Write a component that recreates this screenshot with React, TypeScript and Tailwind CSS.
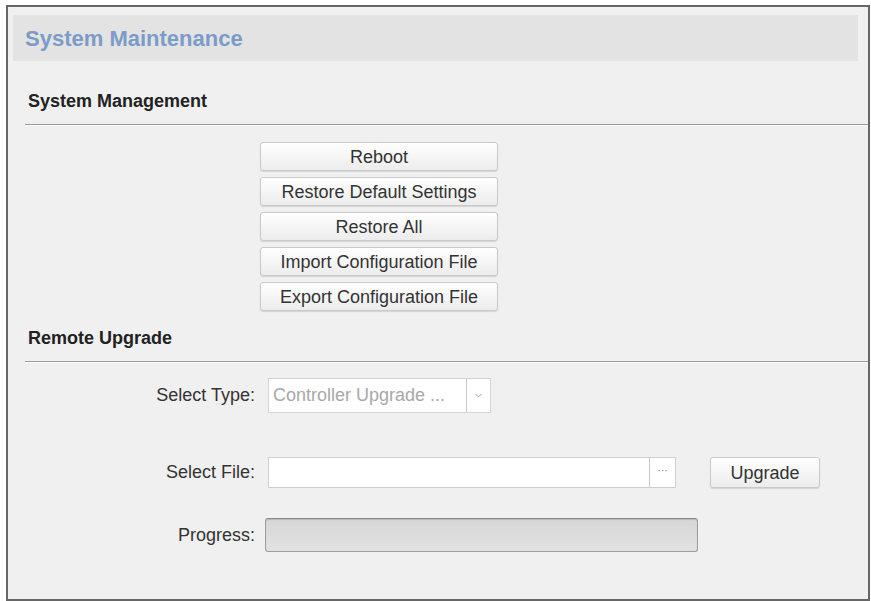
import { ChevronDown } from "lucide-react";

const actions = [
  "Reboot",
  "Restore Default Settings",
  "Restore All",
  "Import Configuration File",
  "Export Configuration File",
];

function SectionTitle({ label, top }: { label: string; top: string }) {
  return (
    <div className={top}>
      <div className="pl-[20px] text-[18px] leading-[22px] font-bold text-[#222]">
        {label}
      </div>
      <div className="mt-[12px] ml-[17px] h-[2px] border-t border-[#9a9a9a] bg-white/70" />
    </div>
  );
}

function FieldLabel({ text }: { text: string }) {
  return (
    <div className="w-[248px] shrink-0 pr-[1px] text-right text-[18px] text-[#333]">
      {text}
    </div>
  );
}

export default function App() {
  return (
    <div
      className="w-[871px] h-[601px] bg-white pt-[5px] pl-[6px] overflow-hidden"
      style={{ fontFamily: '"Liberation Sans", Arial, sans-serif' }}
    >
      <div className="w-[864px] h-[596px] border-2 border-[#666] bg-[#f0f0f0] flex flex-col">
        {/* page header */}
        <div className="mt-[8px] ml-[5px] w-[845px] h-[46px] bg-[#e3e3e3] flex items-center pl-[12px]">
          <span className="text-[22px] font-bold text-[#7b9cc8]">
            System Maintenance
          </span>
        </div>

        <SectionTitle label="System Management" top="mt-[29px]" />

        <div className="mt-[16px] ml-[252px] flex flex-col gap-[6px]">
          {actions.map((a) => (
            <button
              key={a}
              className="w-[238px] h-[29px] rounded-[3px] border border-[#c9c9c9] bg-gradient-to-b from-white to-[#ececec] shadow-[0_1px_1px_rgba(0,0,0,0.12)] text-[18px] leading-none text-[#333]"
            >
              {a}
            </button>
          ))}
        </div>

        <SectionTitle label="Remote Upgrade" top="mt-[16px]" />

        {/* select type */}
        <div className="mt-[15px] flex items-center">
          <FieldLabel text="Select Type:" />
          <div className="ml-[12px] w-[223px] h-[35px] flex border border-[#d4d4d4] bg-white">
            <div className="flex-1 flex items-center pl-[4px] text-[18px] text-[#a8a8a8]">
              Controller Upgrade ...
            </div>
            <div className="w-[24px] border-l border-[#c8c8c8] flex items-center justify-center">
              <ChevronDown className="w-[11px] h-[11px] text-[#9a9a9a]" strokeWidth={2} />
            </div>
          </div>
        </div>

        {/* select file */}
        <div className="mt-[44px] flex items-center">
          <FieldLabel text="Select File:" />
          <div className="ml-[12px] w-[408px] h-[31px] flex border border-[#cfcfcf] bg-white">
            <div className="flex-1" />
            <div className="w-[26px] border-l border-[#c8c8c8] flex items-center justify-center text-[10px] leading-none text-[#777] pb-[4px]">
              ···
            </div>
          </div>
          <button className="ml-[34px] w-[110px] h-[31px] rounded-[3px] border border-[#c9c9c9] bg-gradient-to-b from-white to-[#ececec] shadow-[0_1px_1px_rgba(0,0,0,0.12)] text-[18px] leading-none text-[#333]">
            Upgrade
          </button>
        </div>

        {/* progress */}
        <div className="mt-[30px] flex items-center">
          <FieldLabel text="Progress:" />
          <div className="ml-[9px] w-[433px] h-[34px] rounded-[3px] border border-[#9d9d9d] border-t-[#8a8a8a] bg-gradient-to-b from-[#d6d6d6] to-[#e2e2e2] shadow-[inset_0_1px_1px_rgba(0,0,0,0.15)]" />
        </div>
      </div>
    </div>
  );
}
